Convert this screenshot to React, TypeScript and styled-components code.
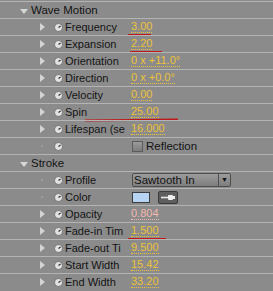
import React, { Fragment } from 'react';
import styled, { createGlobalStyle } from 'styled-components';

const GlobalStyle = createGlobalStyle`
  html, body {
    margin: 0;
    padding: 0;
    background: #8b8b8b;
  }
`;

interface ParamRow {
    label: string
    value?: string
    pink?: boolean
    expand?: boolean
    kind?: 'value' | 'check' | 'select' | 'color'
    mark?: { left: number, width: number, tilt?: number }
}

// labels are cut the way the panel cuts them
const waveRows: ParamRow[] = [
    { label: 'Frequency', value: '3.00', expand: true, mark: { left: 128, width: 23 } },
    { label: 'Expansion', value: '2.20', expand: true, mark: { left: 130, width: 32 } },
    { label: 'Orientation', value: '0 x +11.0°', expand: true },
    { label: 'Direction', value: '0 x +0.0°', expand: true },
    { label: 'Velocity', value: '0.00', expand: true },
    { label: 'Spin', value: '25.00', expand: true, mark: { left: 85, width: 93, tilt: -0.7 } },
    { label: 'Lifespan (se', value: '16.000', expand: true },
    { label: '', kind: 'check' },
];

const strokeRows: ParamRow[] = [
    { label: 'Profile', kind: 'select' },
    { label: 'Color', kind: 'color' },
    { label: 'Opacity', value: '0.804', pink: true, expand: true },
    { label: 'Fade-in Tim', value: '1.500', expand: true, mark: { left: 128, width: 38 } },
    { label: 'Fade-out Ti', value: '9.500', expand: true },
    { label: 'Start Width', value: '15.42', expand: true },
    { label: 'End Width', value: '33.20', expand: true },
];

export default function App() {
    const renderRow = (row: ParamRow, i: number) => (
        <Row key={i}>
            {row.expand ? <Twirl /> : <Dot />}
            <Watch viewBox="0 0 9 9">
                <circle cx="4.5" cy="4.5" r="4" fill="#e2e2e2" stroke="#5a5a5a" strokeWidth="0.7" />
                <path d="M4.5 4.6 L6.6 3" stroke="#333" strokeWidth="1.2" />
            </Watch>
            <Label>{row.label}</Label>
            {(!row.kind || row.kind === 'value') && <Value $pink={row.pink}>{row.value}</Value>}
            {row.kind === 'check' && (
                <Fragment>
                    <Check />
                    <CheckText>Reflection</CheckText>
                </Fragment>
            )}
            {row.kind === 'select' && (
                <Select>
                    <SelectText>Sawtooth In</SelectText>
                    <SelectArrow>▼</SelectArrow>
                </Select>
            )}
            {row.kind === 'color' && (
                <Fragment>
                    <Swatch />
                    <Picker>
                        <svg width="16" height="7" viewBox="0 0 16 7">
                            <path d="M1 3.5 H9" stroke="#e8e8e8" strokeWidth="1.6" />
                            <rect x="8" y="1" width="5" height="5" rx="1" fill="#f0f0f0" />
                            <rect x="12.5" y="2" width="2.5" height="3" fill="#f0f0f0" />
                        </svg>
                    </Picker>
                </Fragment>
            )}
            {row.mark && (
                <Mark
                    style={{
                        left: row.mark.left,
                        width: row.mark.width,
                        transform: row.mark.tilt ? `rotate(${row.mark.tilt}deg)` : undefined,
                    }}
                />
            )}
        </Row>
    );

    return (
        <Fragment>
            <GlobalStyle />
            <Panel>
                <Header>
                    <Caret />
                    <HeaderText>Wave Motion</HeaderText>
                </Header>
                {waveRows.map(renderRow)}
                <Header>
                    <Caret />
                    <HeaderText>Stroke</HeaderText>
                </Header>
                {strokeRows.map(renderRow)}
            </Panel>
        </Fragment>
    );
}

const Panel = styled.div`
    width: 273px;
    height: 291px;
    overflow: hidden;
    background: #8b8b8b;
    padding-top: 1px;
    box-sizing: border-box;
    font-family: "Liberation Sans", Arial, sans-serif;
    font-size: 11px;
    color: #141414;
`

const Row = styled.div`
    position: relative;
    display: flex;
    align-items: center;
    height: 16px;
    border-top: 1px solid #b4b4b4;
`

const Header = styled(Row)`
    padding-left: 20px;
`

const Caret = styled.span`
    width: 0;
    height: 0;
    border-left: 4px solid transparent;
    border-right: 4px solid transparent;
    border-top: 5px solid #d6d6d6;
    margin-right: 3px;
    margin-top: 2px;
`

const HeaderText = styled.span`
    font-size: 11.5px;
`

const Twirl = styled.span`
    width: 0;
    height: 0;
    margin-left: 40px;
    border-top: 4px solid transparent;
    border-bottom: 4px solid transparent;
    border-left: 5px solid #d4d4d4;
`

const Dot = styled.span`
    width: 2px;
    height: 2px;
    margin-left: 41px;
    margin-right: 2px;
    background: #9c9c9c;
`

const Watch = styled.svg`
    width: 9px;
    height: 9px;
    margin-left: 9px;
    flex: none;
`

const Label = styled.span`
    width: 59px;
    margin-left: 2px;
    font-size: 11px;
    white-space: nowrap;
    flex: none;
`

const Value = styled.span<{ $pink?: boolean }>`
    margin-left: 7px;
    font-size: 11px;
    color: ${p => (p.$pink ? '#f2b8ae' : '#ecc23a')};
    line-height: 11px;
    border-bottom: 1px dotted ${p => (p.$pink ? '#f2b8ae' : '#ecc23a')};
`

const Check = styled.span`
    width: 11px;
    height: 11px;
    margin-left: 8px;
    box-sizing: border-box;
    border: 1px solid #5c5c5c;
    background: linear-gradient(#9a9a9a, #7c7c7c);
`

const CheckText = styled.span`
    margin-left: 3px;
    font-size: 11.5px;
`

const Select = styled.div`
    display: flex;
    align-items: center;
    width: 99px;
    height: 14px;
    margin-left: 8px;
    box-sizing: border-box;
    border: 1px solid #4e4e4e;
    border-radius: 2px;
    background: linear-gradient(#9c9c9c, #7e7e7e);
`

const SelectText = styled.span`
    flex: 1;
    padding-left: 1px;
    font-size: 11.5px;
`

const SelectArrow = styled.span`
    width: 11px;
    height: 12px;
    border-left: 1px solid #4e4e4e;
    font-size: 7px;
    line-height: 12px;
    text-align: center;
    color: #111;
`

const Swatch = styled.span`
    width: 18px;
    height: 11px;
    margin-left: 8px;
    box-sizing: border-box;
    border: 1px solid #3c3c3c;
    background: #b8d4f4;
`

const Picker = styled.span`
    display: flex;
    align-items: center;
    justify-content: center;
    width: 20px;
    height: 13px;
    margin-left: 8px;
    box-sizing: border-box;
    border: 1px solid #3a3a3a;
    border-radius: 2px;
    background: #5e5e5e;
`

const Mark = styled.span`
    position: absolute;
    bottom: -1px;
    height: 2px;
    background: #c01818;
`
